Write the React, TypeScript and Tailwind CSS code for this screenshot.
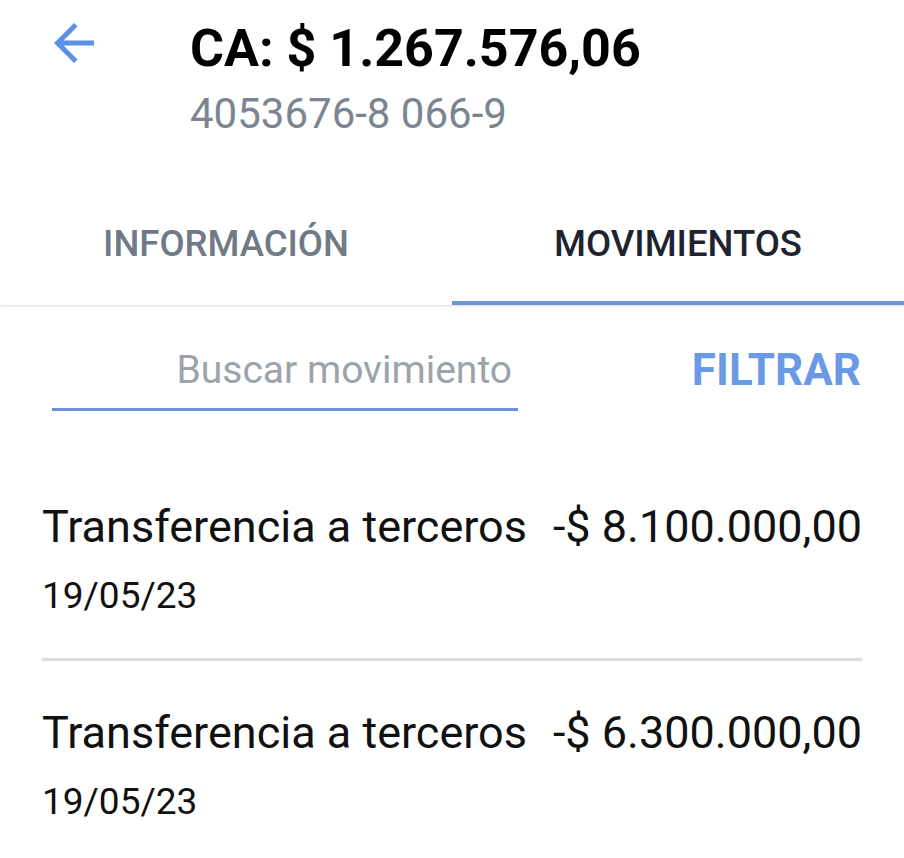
import { useState } from 'react';

const movimientos = [
  { id: 1, concepto: 'Transferencia a terceros', monto: '-$ 8.100.000,00', fecha: '19/05/23' },
  { id: 2, concepto: 'Transferencia a terceros', monto: '-$ 6.300.000,00', fecha: '19/05/23' },
];

const BackArrow = () => (
  <svg width="60" height="60" viewBox="0 0 24 24" className="shrink-0">
    <path
      fill="#5c8fe6"
      d="M20 11H7.83l5.59-5.59L12 4l-8 8 8 8 1.41-1.41L7.83 13H20v-2z"
    />
  </svg>
);

export default function App() {
  const [tab, setTab] = useState<'info' | 'mov'>('mov');
  const [query, setQuery] = useState('');

  return (
    <div className="min-h-screen bg-white font-['Roboto',sans-serif] text-[#111]">
      {/* header */}
      <div className="flex items-start pt-[13px] pl-[44px]">
        <button type="button" aria-label="Volver">
          <BackArrow />
        </button>
        <div className="ml-[86px] pt-[6px]">
          <h1 className="text-[52px] leading-[60px] font-bold text-black">CA: $ 1.267.576,06</h1>
          <p className="mt-[11px] text-[42px] leading-[48px] text-[#7b8591]">4053676-8 066-9</p>
        </div>
      </div>

      {/* tabs */}
      <div className="flex border-b border-[#e6e6e6] shadow-[0_1px_2px_rgba(0,0,0,0.06)]">
        <button
          type="button"
          onClick={() => setTab('info')}
          className={`flex-1 pt-[84px] pb-[35px] border-b-4 text-[36.5px] leading-[44px] font-medium ${
            tab === 'info' ? 'border-[#6a96e0] text-[#1d2430]' : 'border-transparent text-[#6f7a86]'
          }`}
        >
          INFORMACIÓN
        </button>
        <button
          type="button"
          onClick={() => setTab('mov')}
          className={`flex-1 pt-[84px] pb-[35px] border-b-4 text-[36.5px] leading-[44px] font-medium ${
            tab === 'mov' ? 'border-[#6a96e0] text-[#1d2430]' : 'border-transparent text-[#6f7a86]'
          }`}
        >
          MOVIMIENTOS
        </button>
      </div>

      {/* search */}
      <div className="mt-[40px] flex items-start justify-between pl-[52px] pr-[43px]">
        <div className="w-[466px] border-b-[3px] border-[#6b8fd8] pb-[14px]">
          <input
            value={query}
            onChange={e => setQuery(e.target.value)}
            placeholder="Buscar movimiento"
            className="h-[48px] w-full pr-[6px] text-right text-[39px] text-[#111] outline-none placeholder:text-[#9ca3ab]"
          />
        </div>
        <button type="button" className="text-[44px] leading-[48px] font-bold text-[#6a9ae6]">
          FILTRAR
        </button>
      </div>

      {/* list */}
      <div className="mt-[44px] mx-[42px]">
        {movimientos.map((m, i) => (
          <div
            key={m.id}
            className={`pt-[46px] pb-[40px] ${i < movimientos.length - 1 ? 'border-b-[3px] border-[#dedede]' : ''}`}
          >
            <div className="flex justify-between text-[45px] leading-[52px]">
              <span>{m.concepto}</span>
              <span>{m.monto}</span>
            </div>
            <p className="mt-[21px] text-[37px] leading-[44px]">{m.fecha}</p>
          </div>
        ))}
      </div>
    </div>
  );
}
